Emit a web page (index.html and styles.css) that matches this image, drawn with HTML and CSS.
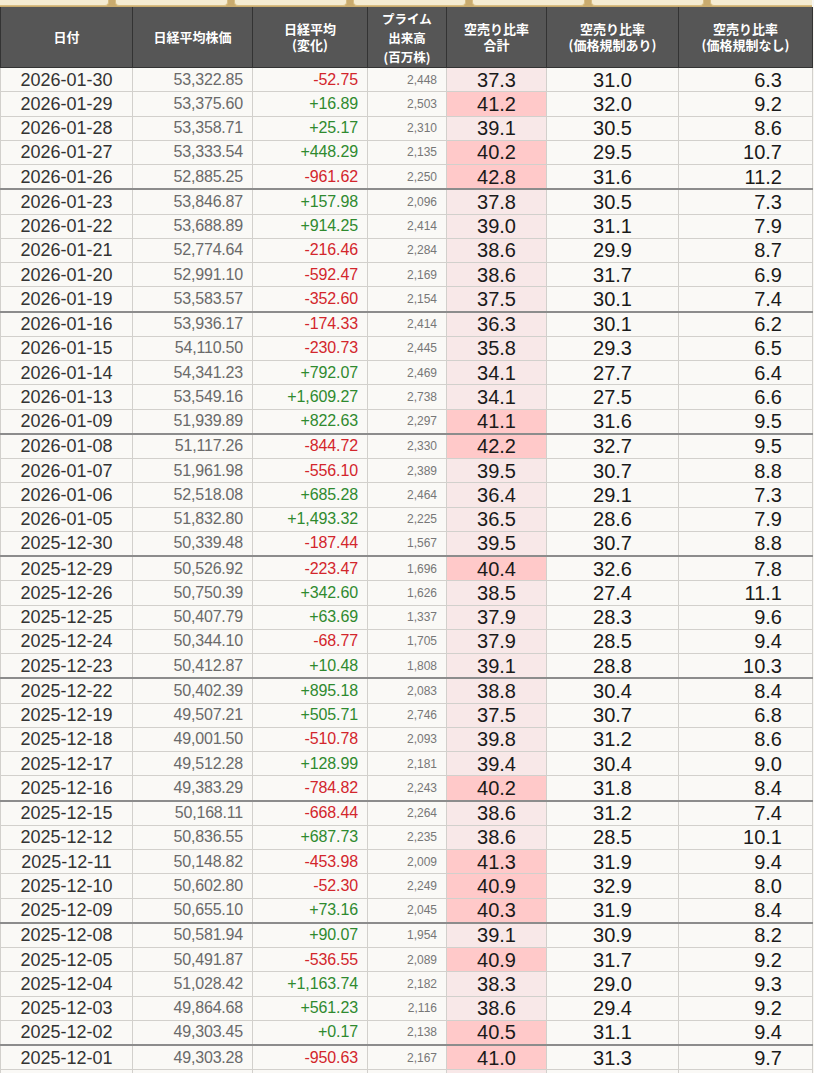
FILE: index.html
```html
<!DOCTYPE html>
<html lang="ja">
<head>
<meta charset="utf-8">
<title>空売り比率</title>
<link rel="stylesheet" href="styles.css">
</head>
<body>
<div class="tabs">
  <div class="tab"></div><div class="tab"></div><div class="tab"></div><div class="tab"></div><div class="tab"></div><div class="tab"></div><div class="tab"></div>
</div>
<table class="data">
  <colgroup>
    <col class="c1"><col class="c2"><col class="c3"><col class="c4"><col class="c5"><col class="c6"><col class="c7">
  </colgroup>
  <thead>
    <tr>
      <th>日付</th>
      <th>日経平均株価</th>
      <th>日経平均<br>(変化)</th>
      <th class="tri">プライム<br>出来高<br>(百万株)</th>
      <th>空売り比率<br>合計</th>
      <th>空売り比率<br>(価格規制あり)</th>
      <th>空売り比率<br>(価格規制なし)</th>
    </tr>
  </thead>
  <tbody>
    <tr><td class="d">2026-01-30</td><td class="p">53,322.85</td><td class="ch dn">-52.75</td><td class="v">2,448</td><td class="r">37.3</td><td class="a">31.0</td><td class="n">6.3</td></tr>
    <tr><td class="d">2026-01-29</td><td class="p">53,375.60</td><td class="ch up">+16.89</td><td class="v">2,503</td><td class="r hi">41.2</td><td class="a">32.0</td><td class="n">9.2</td></tr>
    <tr><td class="d">2026-01-28</td><td class="p">53,358.71</td><td class="ch up">+25.17</td><td class="v">2,310</td><td class="r">39.1</td><td class="a">30.5</td><td class="n">8.6</td></tr>
    <tr><td class="d">2026-01-27</td><td class="p">53,333.54</td><td class="ch up">+448.29</td><td class="v">2,135</td><td class="r hi">40.2</td><td class="a">29.5</td><td class="n">10.7</td></tr>
    <tr><td class="d">2026-01-26</td><td class="p">52,885.25</td><td class="ch dn">-961.62</td><td class="v">2,250</td><td class="r hi">42.8</td><td class="a">31.6</td><td class="n">11.2</td></tr>
    <tr class="wk"><td class="d">2026-01-23</td><td class="p">53,846.87</td><td class="ch up">+157.98</td><td class="v">2,096</td><td class="r">37.8</td><td class="a">30.5</td><td class="n">7.3</td></tr>
    <tr><td class="d">2026-01-22</td><td class="p">53,688.89</td><td class="ch up">+914.25</td><td class="v">2,414</td><td class="r">39.0</td><td class="a">31.1</td><td class="n">7.9</td></tr>
    <tr><td class="d">2026-01-21</td><td class="p">52,774.64</td><td class="ch dn">-216.46</td><td class="v">2,284</td><td class="r">38.6</td><td class="a">29.9</td><td class="n">8.7</td></tr>
    <tr><td class="d">2026-01-20</td><td class="p">52,991.10</td><td class="ch dn">-592.47</td><td class="v">2,169</td><td class="r">38.6</td><td class="a">31.7</td><td class="n">6.9</td></tr>
    <tr><td class="d">2026-01-19</td><td class="p">53,583.57</td><td class="ch dn">-352.60</td><td class="v">2,154</td><td class="r">37.5</td><td class="a">30.1</td><td class="n">7.4</td></tr>
    <tr class="wk"><td class="d">2026-01-16</td><td class="p">53,936.17</td><td class="ch dn">-174.33</td><td class="v">2,414</td><td class="r">36.3</td><td class="a">30.1</td><td class="n">6.2</td></tr>
    <tr><td class="d">2026-01-15</td><td class="p">54,110.50</td><td class="ch dn">-230.73</td><td class="v">2,445</td><td class="r">35.8</td><td class="a">29.3</td><td class="n">6.5</td></tr>
    <tr><td class="d">2026-01-14</td><td class="p">54,341.23</td><td class="ch up">+792.07</td><td class="v">2,469</td><td class="r">34.1</td><td class="a">27.7</td><td class="n">6.4</td></tr>
    <tr><td class="d">2026-01-13</td><td class="p">53,549.16</td><td class="ch up">+1,609.27</td><td class="v">2,738</td><td class="r">34.1</td><td class="a">27.5</td><td class="n">6.6</td></tr>
    <tr><td class="d">2026-01-09</td><td class="p">51,939.89</td><td class="ch up">+822.63</td><td class="v">2,297</td><td class="r hi">41.1</td><td class="a">31.6</td><td class="n">9.5</td></tr>
    <tr class="wk"><td class="d">2026-01-08</td><td class="p">51,117.26</td><td class="ch dn">-844.72</td><td class="v">2,330</td><td class="r hi">42.2</td><td class="a">32.7</td><td class="n">9.5</td></tr>
    <tr><td class="d">2026-01-07</td><td class="p">51,961.98</td><td class="ch dn">-556.10</td><td class="v">2,389</td><td class="r">39.5</td><td class="a">30.7</td><td class="n">8.8</td></tr>
    <tr><td class="d">2026-01-06</td><td class="p">52,518.08</td><td class="ch up">+685.28</td><td class="v">2,464</td><td class="r">36.4</td><td class="a">29.1</td><td class="n">7.3</td></tr>
    <tr><td class="d">2026-01-05</td><td class="p">51,832.80</td><td class="ch up">+1,493.32</td><td class="v">2,225</td><td class="r">36.5</td><td class="a">28.6</td><td class="n">7.9</td></tr>
    <tr><td class="d">2025-12-30</td><td class="p">50,339.48</td><td class="ch dn">-187.44</td><td class="v">1,567</td><td class="r">39.5</td><td class="a">30.7</td><td class="n">8.8</td></tr>
    <tr class="wk"><td class="d">2025-12-29</td><td class="p">50,526.92</td><td class="ch dn">-223.47</td><td class="v">1,696</td><td class="r hi">40.4</td><td class="a">32.6</td><td class="n">7.8</td></tr>
    <tr><td class="d">2025-12-26</td><td class="p">50,750.39</td><td class="ch up">+342.60</td><td class="v">1,626</td><td class="r">38.5</td><td class="a">27.4</td><td class="n">11.1</td></tr>
    <tr><td class="d">2025-12-25</td><td class="p">50,407.79</td><td class="ch up">+63.69</td><td class="v">1,337</td><td class="r">37.9</td><td class="a">28.3</td><td class="n">9.6</td></tr>
    <tr><td class="d">2025-12-24</td><td class="p">50,344.10</td><td class="ch dn">-68.77</td><td class="v">1,705</td><td class="r">37.9</td><td class="a">28.5</td><td class="n">9.4</td></tr>
    <tr><td class="d">2025-12-23</td><td class="p">50,412.87</td><td class="ch up">+10.48</td><td class="v">1,808</td><td class="r">39.1</td><td class="a">28.8</td><td class="n">10.3</td></tr>
    <tr class="wk"><td class="d">2025-12-22</td><td class="p">50,402.39</td><td class="ch up">+895.18</td><td class="v">2,083</td><td class="r">38.8</td><td class="a">30.4</td><td class="n">8.4</td></tr>
    <tr><td class="d">2025-12-19</td><td class="p">49,507.21</td><td class="ch up">+505.71</td><td class="v">2,746</td><td class="r">37.5</td><td class="a">30.7</td><td class="n">6.8</td></tr>
    <tr><td class="d">2025-12-18</td><td class="p">49,001.50</td><td class="ch dn">-510.78</td><td class="v">2,093</td><td class="r">39.8</td><td class="a">31.2</td><td class="n">8.6</td></tr>
    <tr><td class="d">2025-12-17</td><td class="p">49,512.28</td><td class="ch up">+128.99</td><td class="v">2,181</td><td class="r">39.4</td><td class="a">30.4</td><td class="n">9.0</td></tr>
    <tr><td class="d">2025-12-16</td><td class="p">49,383.29</td><td class="ch dn">-784.82</td><td class="v">2,243</td><td class="r hi">40.2</td><td class="a">31.8</td><td class="n">8.4</td></tr>
    <tr class="wk"><td class="d">2025-12-15</td><td class="p">50,168.11</td><td class="ch dn">-668.44</td><td class="v">2,264</td><td class="r">38.6</td><td class="a">31.2</td><td class="n">7.4</td></tr>
    <tr><td class="d">2025-12-12</td><td class="p">50,836.55</td><td class="ch up">+687.73</td><td class="v">2,235</td><td class="r">38.6</td><td class="a">28.5</td><td class="n">10.1</td></tr>
    <tr><td class="d">2025-12-11</td><td class="p">50,148.82</td><td class="ch dn">-453.98</td><td class="v">2,009</td><td class="r hi">41.3</td><td class="a">31.9</td><td class="n">9.4</td></tr>
    <tr><td class="d">2025-12-10</td><td class="p">50,602.80</td><td class="ch dn">-52.30</td><td class="v">2,249</td><td class="r hi">40.9</td><td class="a">32.9</td><td class="n">8.0</td></tr>
    <tr><td class="d">2025-12-09</td><td class="p">50,655.10</td><td class="ch up">+73.16</td><td class="v">2,045</td><td class="r hi">40.3</td><td class="a">31.9</td><td class="n">8.4</td></tr>
    <tr class="wk"><td class="d">2025-12-08</td><td class="p">50,581.94</td><td class="ch up">+90.07</td><td class="v">1,954</td><td class="r">39.1</td><td class="a">30.9</td><td class="n">8.2</td></tr>
    <tr><td class="d">2025-12-05</td><td class="p">50,491.87</td><td class="ch dn">-536.55</td><td class="v">2,089</td><td class="r hi">40.9</td><td class="a">31.7</td><td class="n">9.2</td></tr>
    <tr><td class="d">2025-12-04</td><td class="p">51,028.42</td><td class="ch up">+1,163.74</td><td class="v">2,182</td><td class="r">38.3</td><td class="a">29.0</td><td class="n">9.3</td></tr>
    <tr><td class="d">2025-12-03</td><td class="p">49,864.68</td><td class="ch up">+561.23</td><td class="v">2,116</td><td class="r">38.6</td><td class="a">29.4</td><td class="n">9.2</td></tr>
    <tr><td class="d">2025-12-02</td><td class="p">49,303.45</td><td class="ch up">+0.17</td><td class="v">2,138</td><td class="r hi">40.5</td><td class="a">31.1</td><td class="n">9.4</td></tr>
    <tr class="wk"><td class="d">2025-12-01</td><td class="p">49,303.28</td><td class="ch dn">-950.63</td><td class="v">2,167</td><td class="r hi">41.0</td><td class="a">31.3</td><td class="n">9.7</td></tr>
    <tr><td class="d"></td><td class="p"></td><td class="ch"></td><td class="v"></td><td class="r"></td><td class="a"></td><td class="n"></td></tr>
  </tbody>
</table>
</body>
</html>
```
FILE: styles.css
```css
html, body {
  margin: 0;
  padding: 0;
  background: #f8f7f3;
  overflow: hidden;
}

body {
  font-family: "Liberation Sans", Arial, sans-serif;
}

.tabs {
  display: flex;
  gap: 6px;
  height: 7px;
  margin-left: -4px;
  background: #c9ab6e;
  overflow: hidden;
  width: 816px;
}

.tab {
  flex: 0 0 111px;
  height: 5px;
  background: #f5ecd2;
  border: 1px solid #d8be84;
  border-top: none;
  border-radius: 0 0 4px 4px;
}

.data {
  border-collapse: collapse;
  table-layout: fixed;
  width: 812px;
}

.c1 { width: 132px; }
.c2 { width: 120px; }
.c3 { width: 115px; }
.c4 { width: 79px; }
.c5 { width: 100px; }
.c6 { width: 132px; }
.c7 { width: 134px; }

.data th {
  height: 60px;
  padding: 0 2px;
  background: #565656;
  color: #ffffff;
  border: 1px solid #333333;
  border-top: none;
  font-family: "Noto Sans CJK JP", "Liberation Sans", sans-serif;
  font-size: 13px;
  font-weight: bold;
  line-height: 16px;
  text-align: center;
  vertical-align: middle;
}

.data th.tri {
  line-height: 19px;
  font-size: 12.5px;
}

.data td {
  height: 23.25px;
  padding: 0 9px;
  border: 1px solid #d2d0cc;
  background: #faf9f6;
  vertical-align: middle;
  line-height: 1;
  white-space: nowrap;
}

.data tr.wk td {
  border-top: 2px solid #8c8c8c;
}

.d {
  text-align: center;
  font-size: 18px;
  color: #333333;
}

.p {
  text-align: right;
  font-size: 16px;
  letter-spacing: -0.2px;
  color: #6a6a6a;
}

.ch {
  text-align: right;
  font-size: 16px;
  letter-spacing: -0.1px;
}

.up { color: #2f8a2f; }
.dn { color: #d3262c; }

.v {
  text-align: right;
  font-size: 12px;
  color: #777777;
}

.data td.r {
  text-align: center;
  font-size: 20px;
  color: #1a1a1a;
  background: #f8e8e8;
}

.data td.r.hi {
  background: #ffc9c9;
}

.a {
  text-align: center;
  font-size: 20px;
  color: #1a1a1a;
}

.data td.n {
  text-align: right;
  padding-right: 30px;
  font-size: 20px;
  color: #1a1a1a;
}
```
